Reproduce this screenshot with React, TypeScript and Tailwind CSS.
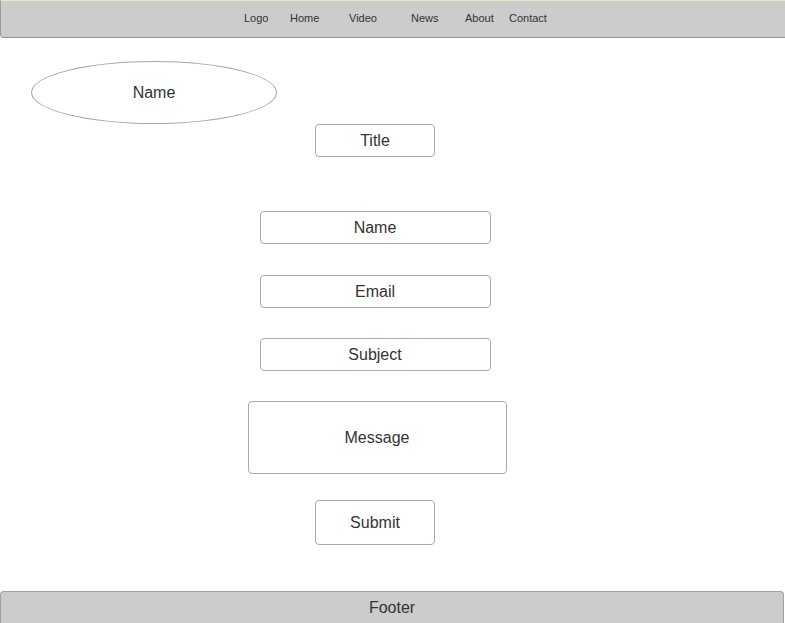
const navItems = [
  { label: "Logo", w: "w-[46px]" },
  { label: "Home", w: "w-[59px]" },
  { label: "Video", w: "w-[62px]" },
  { label: "News", w: "w-[54px]" },
  { label: "About", w: "w-[44px]" },
  { label: "Contact", w: "w-[40px]" },
]

const fields = [
  { label: "Name", mt: "mt-0" },
  { label: "Email", mt: "mt-[31px]" },
  { label: "Subject", mt: "mt-[30px]" },
]

export default function App() {
  return (
    <div className="min-h-[623px] bg-white font-['Liberation_Sans',Arial,sans-serif] text-[#333]">
      {/* Header */}
      <header className="h-[38px] border-t border-t-[#f3e2c6] border-b border-b-[#8f8f8f] border-l border-l-[#9a9a9a] rounded-bl-[4px] bg-[#cccccc]">
        <nav className="flex h-full items-center pb-[2px] pl-[243px] text-[11px]">
          {navItems.map((item) => (
            <a key={item.label} href="#" className={`${item.w} shrink-0 whitespace-nowrap`}>
              {item.label}
            </a>
          ))}
        </nav>
      </header>

      {/* Name bubble */}
      <div className="ml-[31px] mt-[23px] flex h-[63px] w-[246px] items-center justify-center rounded-[50%] border border-[#a6a6a6] text-[16px]">
        Name
      </div>

      {/* Form */}
      <div className="flex w-[750px] flex-col items-center text-[16px]">
        <div className="flex h-[33px] w-[120px] items-center justify-center rounded-[4px] border border-[#aaaaaa]">
          Title
        </div>

        <div className="mt-[54px] flex flex-col">
          {fields.map((f) => (
            <div
              key={f.label}
              className={`${f.mt} flex h-[33px] w-[231px] items-center justify-center rounded-[4px] border border-[#aaaaaa]`}
            >
              {f.label}
            </div>
          ))}
        </div>

        <div className="ml-[4px] mt-[30px] flex h-[73px] w-[259px] items-center justify-center rounded-[4px] border border-[#aaaaaa]">
          Message
        </div>

        <button className="mt-[26px] flex h-[45px] w-[120px] items-center justify-center rounded-[4px] border border-[#aaaaaa] bg-white">
          Submit
        </button>
      </div>

      {/* Footer */}
      <footer className="mt-[46px] mr-[1px] flex h-[32px] items-center justify-center rounded-t-[4px] border border-b-0 border-[#a0a0a0] bg-[#cccccc] text-[16px]">
        Footer
      </footer>
    </div>
  )
}
